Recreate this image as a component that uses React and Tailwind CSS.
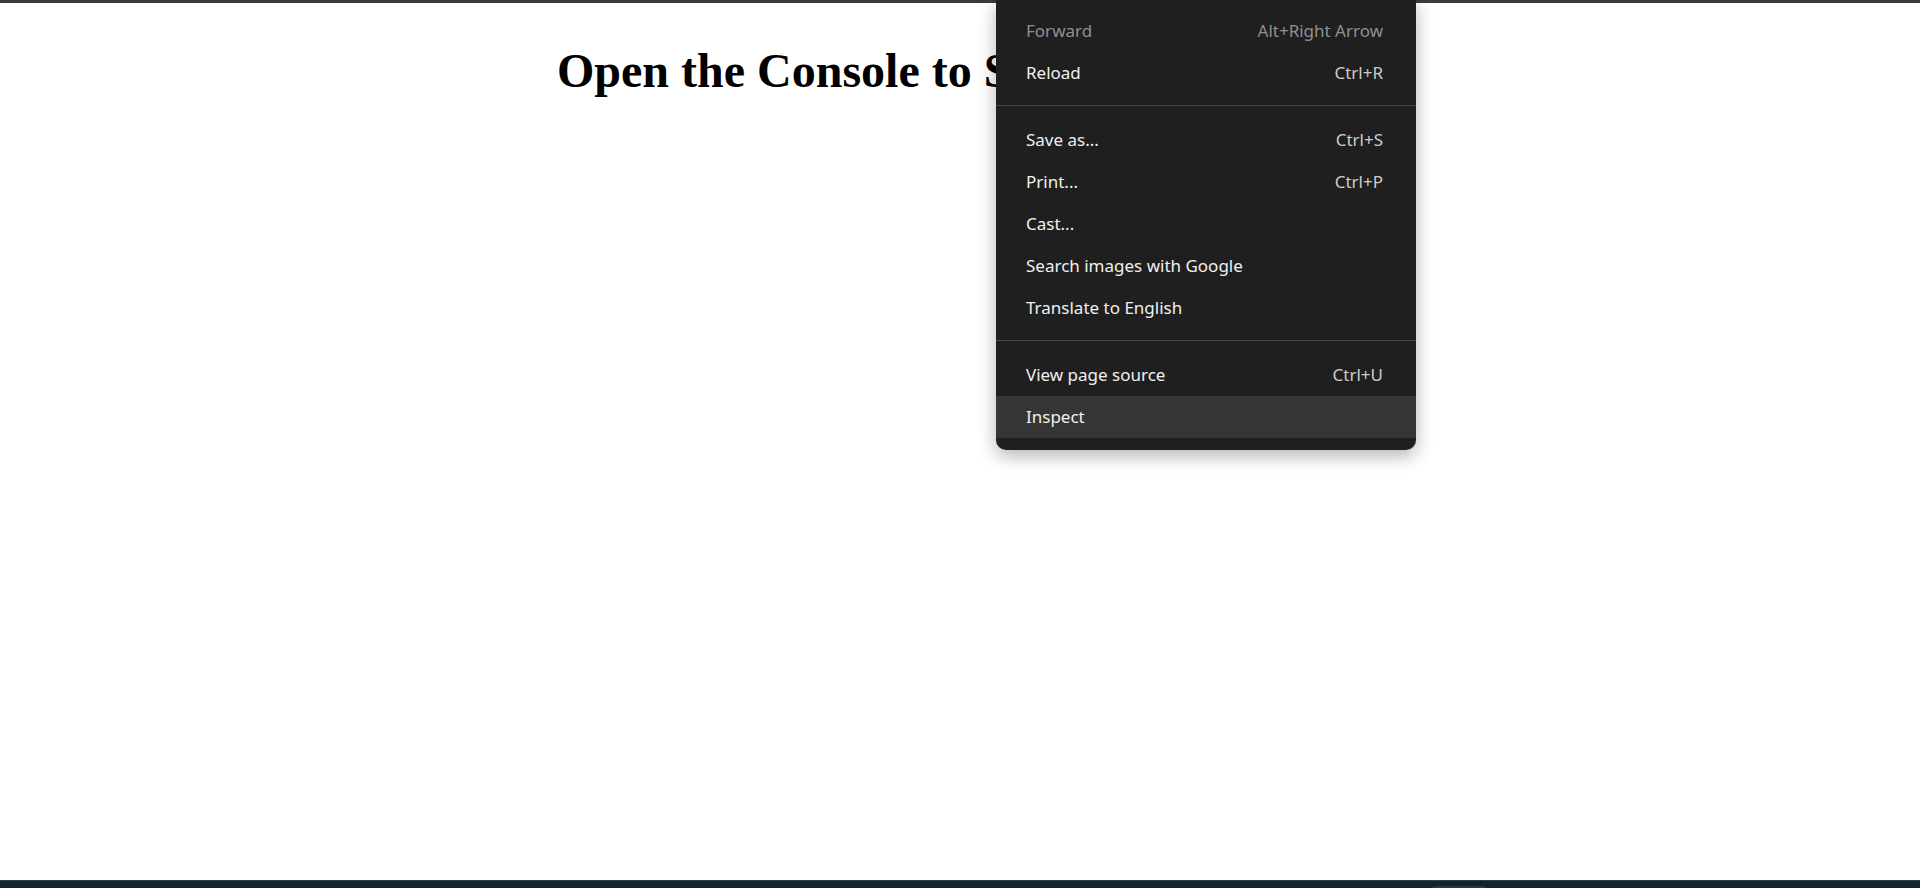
import React from 'react'

const items = [
  { label: 'Forward', key: 'Alt+Right Arrow', disabled: true },
  { label: 'Reload', key: 'Ctrl+R' },
  { sep: true },
  { label: 'Save as...', key: 'Ctrl+S' },
  { label: 'Print...', key: 'Ctrl+P' },
  { label: 'Cast...' },
  { label: 'Search images with Google' },
  { label: 'Translate to English' },
  { sep: true },
  { label: 'View page source', key: 'Ctrl+U' },
  { label: 'Inspect', active: true },
]

function ContextMenu() {
  return (
    <div className="absolute left-[996px] top-0 w-[420px] bg-[#1f1f1f] rounded-b-[10px] pt-[10px] pb-[12px] shadow-[0_6px_18px_rgba(0,0,0,0.3)] font-['Noto_Sans',sans-serif] text-[17px]">
      {items.map((it, i) =>
        it.sep ? (
          <div key={i} className="h-[25px] pt-[11px]">
            <div className="h-px bg-[#454545]" />
          </div>
        ) : (
          <div
            key={i}
            className={`h-[42px] flex items-center justify-between pl-[30px] pr-[33px] ${it.active ? 'bg-[#353535]' : ''}`}
          >
            <span className={it.disabled ? 'text-[#8f8f8f]' : 'text-[#f0f0f0]'}>{it.label}</span>
            {it.key && <span className={it.disabled ? 'text-[#8f8f8f]' : 'text-[#cccccc]'}>{it.key}</span>}
          </div>
        )
      )}
    </div>
  )
}

export default function App() {
  return (
    <div className="relative h-screen flex flex-col bg-white overflow-hidden">
      <div className="h-[3px] bg-[#3b3b3b]" />
      <div className="flex-1">
        <h1 className="pl-[557px] pt-[41px] text-[48px] font-bold leading-[53px] text-black font-['Liberation_Serif',serif] whitespace-nowrap">
          Open the Console to See the Output
        </h1>
      </div>
      <div className="h-[8px] relative bg-[#10252d] border-t border-[#2f4248]">
        <div className="absolute left-[1432px] top-[5px] w-[54px] h-[4px] rounded-t-[3px] bg-[#263a41]" />
      </div>
      <ContextMenu />
    </div>
  )
}
